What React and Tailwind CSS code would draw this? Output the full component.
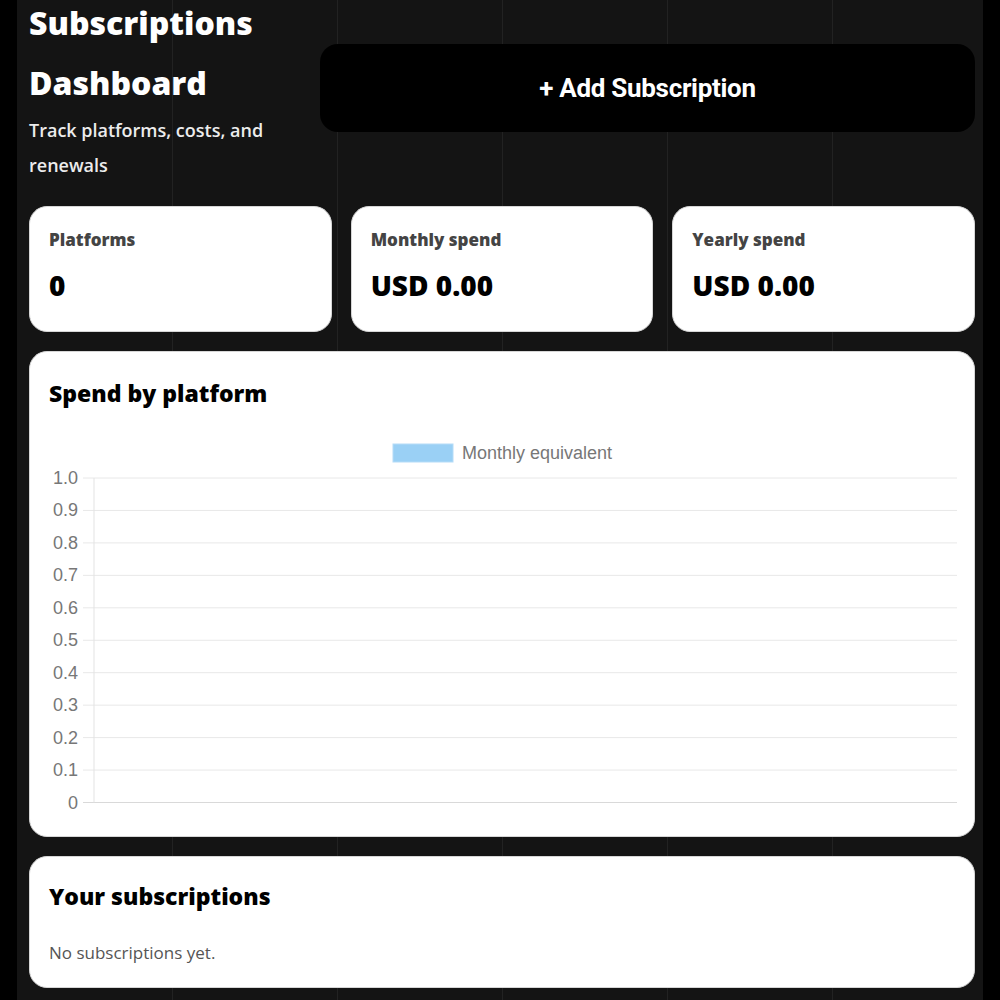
import React from 'react'

const ticks = ['1.0', '0.9', '0.8', '0.7', '0.6', '0.5', '0.4', '0.3', '0.2', '0.1', '0']

function StatCard({ label, value }) {
  return (
    <div className="bg-white rounded-[18px] border border-[#d6d6d6] pl-[19px] pr-[19px] pt-[21px] pb-[27px]">
      <div className="text-[17px] leading-[24px] font-extrabold text-[#444]">{label}</div>
      <div className="mt-[14px] text-[28px] leading-[38px] font-extrabold text-black">{value}</div>
    </div>
  )
}

function SpendChart() {
  const top = 53
  const step = 32.45
  return (
    <svg width="908" height="394" viewBox="0 0 908 394" className="block">
      <rect x="344" y="19" width="60" height="18" fill="#9ad0f5" stroke="#b5dcf7" strokeWidth="1" />
      <text x="413" y="34" fontSize="18" fill="#777" fontFamily="'Liberation Sans', Arial, sans-serif">
        Monthly equivalent
      </text>
      {ticks.map((t, i) => {
        const y = top + i * step
        return (
          <g key={t}>
            <line x1="34" x2="908" y1={y} y2={y} stroke={i === ticks.length - 1 ? '#d9d9d9' : '#e8e8e8'} strokeWidth="1" />
            <text x="29" y={y + 6} textAnchor="end" fontSize="18" fill="#777" fontFamily="'Liberation Sans', Arial, sans-serif">
              {t}
            </text>
          </g>
        )
      })}
      <line x1="45" x2="45" y1={top} y2={top + 10 * step} stroke="#e3e3e3" strokeWidth="1" />
    </svg>
  )
}

export default function App() {
  return (
    <div className="min-h-screen bg-black font-['Open_Sans',sans-serif]">
      <div className="mx-[17px] min-h-screen pl-[12px] pr-[8px] pb-[13px] bg-[#141414] bg-[linear-gradient(to_right,#222_1px,transparent_1px)] bg-[length:165px_100%] bg-[position:155px_0]">
        <header className="-mt-[7px] flex items-center gap-[16px]">
          <div className="w-[275px] shrink-0">
            <h1 className="text-[32px] leading-[60px] font-extrabold text-white">Subscriptions Dashboard</h1>
            <p className="text-[18px] leading-[35px] font-semibold text-[#ececec]">Track platforms, costs, and renewals</p>
          </div>
          <button className="flex-1 h-[88px] rounded-[18px] bg-black text-white text-[26px] font-bold font-['Roboto',sans-serif] tracking-[-0.3px]">
            + Add Subscription
          </button>
        </header>

        <div className="mt-[23px] grid grid-cols-3 gap-[19px]">
          <StatCard label="Platforms" value="0" />
          <StatCard label="Monthly spend" value="USD 0.00" />
          <StatCard label="Yearly spend" value="USD 0.00" />
        </div>

        <section className="mt-[19px] bg-white rounded-[18px] border border-[#d6d6d6] px-[19px] pt-[25px] pb-[17px]">
          <h2 className="text-[23px] leading-[32px] font-extrabold text-black">Spend by platform</h2>
          <div className="mt-[16px]">
            <SpendChart />
          </div>
        </section>

        <section className="mt-[19px] bg-white rounded-[18px] border border-[#d6d6d6] px-[19px] pt-[23px] pb-[22px]">
          <h2 className="text-[23px] leading-[32px] font-extrabold text-black">Your subscriptions</h2>
          <p className="mt-[29px] text-[17px] leading-[24px] text-[#555]">No subscriptions yet.</p>
        </section>
      </div>
    </div>
  )
}
